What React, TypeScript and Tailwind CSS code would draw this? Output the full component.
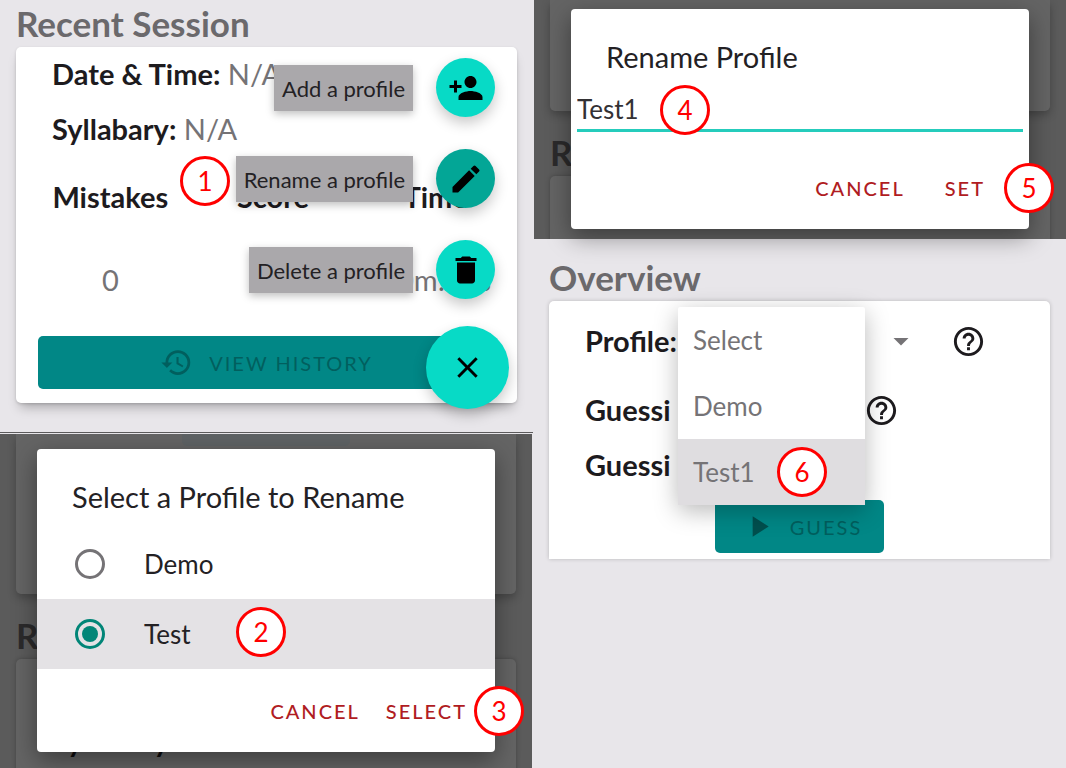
import type { ReactNode } from "react";
import {
  MdArrowDropDown,
  MdClose,
  MdDelete,
  MdEdit,
  MdHelpOutline,
  MdHistory,
  MdPersonAdd,
  MdPlayArrow,
} from "react-icons/md";

const cardShadow = "shadow-[0_1px_3px_rgba(0,0,0,0.15),0_8px_12px_-4px_rgba(0,0,0,0.28)]";
const fabShadow = "shadow-[0_6px_14px_rgba(0,0,0,0.22)]";

function Heading({ children }: { children: ReactNode }) {
  return (
    <h2 className="pb-px text-[35px] leading-[46px] font-bold text-[#6b696c]">{children}</h2>
  );
}

function Callout({ n, className }: { n: number; className: string }) {
  return (
    <span
      className={`absolute z-20 flex size-[50px] items-center justify-center rounded-full border-3 border-[#ff0000] bg-white text-[26px] leading-none text-[#ff0000] ${className}`}
    >
      {n}
    </span>
  );
}

function SpeedDialItem({ label, icon, active }: { label: string; icon: ReactNode; active?: boolean }) {
  return (
    <div className="flex items-center gap-[23px]">
      <span className="bg-[#aaa8ab] px-2 pt-px text-[22px] leading-[45px] text-[#232124] shadow-[0_3px_8px_rgba(0,0,0,0.25)]">
        {label}
      </span>
      <button
        type="button"
        aria-label={label}
        className={`flex size-[59px] items-center justify-center rounded-full text-[36px] text-black ${fabShadow} ${
          active ? "bg-[#03a696]" : "bg-[#07dac6]"
        }`}
      >
        {icon}
      </button>
    </div>
  );
}

function RecentSession() {
  return (
    <section className="relative px-4 pb-[29px]">
      <Heading>Recent Session</Heading>
      <div className={`rounded-[5px] bg-white pt-[7px] pb-[14px] text-[29px] leading-10 ${cardShadow}`}>
        <div className="flex flex-col gap-[15px] pl-9 text-[#757376]">
          <p>
            <b className="font-bold text-[#1d1b1e]">Date &amp; Time:</b> N/A
          </p>
          <p>
            <b className="font-bold text-[#1d1b1e]">Syllabary:</b> N/A
          </p>
        </div>
        <div className="mt-7 pl-[13px]">
          <table className="w-full table-fixed text-center text-[#757376]">
            <thead className="text-[#1d1b1e]">
              <tr>
                <th className="pb-[43px] font-bold">Mistakes</th>
                <th className="pb-[43px] font-bold">Score</th>
                <th className="pb-[43px] font-bold">Time</th>
              </tr>
            </thead>
            <tbody>
              <tr>
                <td>0</td>
                <td>0</td>
                <td>00m:00s</td>
              </tr>
            </tbody>
          </table>
        </div>
        <div className="mt-9 px-[22px]">
          <button
            type="button"
            className="flex h-[53px] w-full items-center justify-center gap-4 rounded-[5px] bg-[#018786] text-[20px] tracking-[2px] text-[#015f5e]"
          >
            <MdHistory className="text-[33px]" />
            VIEW HISTORY
          </button>
        </div>
      </div>

      <div className="absolute top-[58px] right-6 flex flex-col items-end gap-[27px]">
        <div className="flex flex-col items-end gap-8 pr-[14px]">
          <SpeedDialItem label="Add a profile" icon={<MdPersonAdd />} />
          <SpeedDialItem label="Rename a profile" icon={<MdEdit />} active />
          <SpeedDialItem label="Delete a profile" icon={<MdDelete />} />
        </div>
        <button
          type="button"
          aria-label="Close menu"
          className={`flex size-[83px] items-center justify-center rounded-full bg-[#07dac6] text-[35px] text-black ${fabShadow}`}
        >
          <MdClose />
        </button>
      </div>
      <Callout n={1} className="top-[156px] left-[180px]" />
    </section>
  );
}

/* Dimmed page behind an open dialog. */
function Backdrop({ firstCard, buttonEdge }: { firstCard: string; buttonEdge?: boolean }) {
  return (
    <div className="absolute inset-0 overflow-hidden bg-[#5b5b5b] px-4">
      <div
        className={`flex justify-center rounded-b-[5px] bg-[#646464] shadow-[0_4px_8px_rgba(0,0,0,0.25)] ${firstCard}`}
      >
        {buttonEdge && <div className="h-3 w-[168px] rounded-b-[5px] bg-[#5e6264]" />}
      </div>
      <p className="mt-[18px] pb-px text-[35px] leading-[46px] font-bold text-[#2b2a2b]">Recent Session</p>
      <div className="h-[300px] rounded-t-[5px] bg-[#646464] pt-[62px] pl-9 text-[29px] leading-10 font-bold text-[#0d0c0d] shadow-[0_0_4px_rgba(0,0,0,0.25)]">
        {buttonEdge && "Syllabary:"}
      </div>
    </div>
  );
}

function Dialog({ title, children }: { title: string; children: ReactNode }) {
  return (
    <form className="relative rounded-[4px] bg-white shadow-[0_8px_24px_rgba(0,0,0,0.4)]">
      <h3 className="pt-7 pl-[35px] text-[29px] leading-10 text-[#232124]">{title}</h3>
      {children}
    </form>
  );
}

function DialogButton({ children }: { children: ReactNode }) {
  return (
    <button type="button" className="text-[20px] leading-6 font-medium tracking-[2px] text-[#b01c22]">
      {children}
    </button>
  );
}

function SelectProfileDialog() {
  const row = "flex h-[70px] items-center gap-[39px] pl-[38px] text-[26px] text-[#232124]";
  const radio =
    "grid size-[30px] appearance-none place-content-center rounded-full border-3 border-[#757376] checked:border-[#018577] checked:before:size-4 checked:before:rounded-full checked:before:bg-[#018577]";
  return (
    <section className="relative flex-1 border-t border-[#5c5b5c]">
      <div className="relative h-full border-t border-r border-[#e8e6ea] px-[37px] pt-[15px] pb-4">
        <Backdrop firstCard="h-[160px]" buttonEdge />
        <Dialog title="Select a Profile to Rename">
          <div className="pt-3">
            <label className={row}>
              <input type="radio" name="profile" className={radio} />
              Demo
            </label>
            <label className={`${row} relative bg-[#e4e2e5]`}>
              <input type="radio" name="profile" defaultChecked className={radio} />
              Test
              <Callout n={2} className="top-2 left-[199px]" />
            </label>
          </div>
          <div className="relative flex justify-end gap-[26px] pt-[30px] pr-7 pb-[29px]">
            <DialogButton>CANCEL</DialogButton>
            <DialogButton>SELECT</DialogButton>
            <Callout n={3} className="top-[17px] -right-[29px]" />
          </div>
        </Dialog>
      </div>
    </section>
  );
}

function RenameDialog() {
  return (
    <section className="relative ml-px px-[37px] pt-[9px] pb-[10px]">
      <Backdrop firstCard="h-[111px]" />
      <Dialog title="Rename Profile">
        <div className="relative px-[6px] pt-[11px]">
          <input
            type="text"
            aria-label="Profile name"
            defaultValue="Test1"
            className="block h-11 w-full border-b-3 border-[#25ccbc] bg-transparent text-[26px] text-[#333134] outline-none"
          />
          <Callout n={4} className="top-2 left-[89px]" />
        </div>
        <div className="relative flex justify-end gap-10 pt-11 pr-11 pb-[29px]">
          <DialogButton>CANCEL</DialogButton>
          <DialogButton>SET</DialogButton>
          <Callout n={5} className="top-[31px] -right-[25px]" />
        </div>
      </Dialog>
    </section>
  );
}

function Overview() {
  const option = "flex h-[66px] w-full items-center pl-[15px] text-left";
  return (
    <section className="px-4 pt-[15px]">
      <Heading>Overview</Heading>
      <div className="relative rounded-t-[5px] bg-white pt-5 pb-[6px] pl-9 text-[29px] leading-10 font-bold text-[#1d1b1e] shadow-[0_0_4px_rgba(0,0,0,0.2)]">
        <div className="flex items-center">
          <label htmlFor="profile-select" className="w-[92px]">
            Profile:
          </label>
          <div className="relative ml-4 w-[226px]">
            <select
              id="profile-select"
              defaultValue="Test1"
              className="block w-full appearance-none bg-transparent text-[26px] font-normal text-[#757376]"
            >
              <option>Select</option>
              <option>Demo</option>
              <option>Test1</option>
            </select>
            <MdArrowDropDown className="pointer-events-none absolute top-[2px] right-0 text-[36px] text-[#757376]" />
          </div>
          <button type="button" aria-label="Help with profiles" className="ml-8 text-[35px]">
            <MdHelpOutline />
          </button>
        </div>
        <div className="mt-[29px] flex items-center">
          <span className="w-[279px]">Guessi</span>
          <button type="button" aria-label="Help with guessing" className="text-[35px]">
            <MdHelpOutline />
          </button>
        </div>
        <p className="mt-[15px]">Guessi</p>
        <div className="mt-[15px] flex justify-center pr-9">
          <button
            type="button"
            className="flex h-[53px] items-center gap-[14px] rounded-[5px] bg-[#018786] pr-[22px] pl-[26px] text-[20px] font-normal tracking-[2px] text-[#015f5e]"
          >
            <MdPlayArrow className="text-[35px] text-[#014f4e]" />
            GUESS
          </button>
        </div>

        <ul className="absolute top-[6px] left-[129px] z-10 w-[187px] rounded-[2px] bg-white text-[26px] font-normal text-[#757376] shadow-[0_6px_24px_rgba(0,0,0,0.28)]">
          <li>
            <button type="button" className={option}>
              Select
            </button>
          </li>
          <li>
            <button type="button" className={option}>
              Demo
            </button>
          </li>
          <li className="relative bg-[#dfdde0]">
            <button type="button" className={option}>
              Test1
            </button>
            <Callout n={6} className="top-2 left-[99px]" />
          </li>
        </ul>
      </div>
    </section>
  );
}

export default function App() {
  return (
    <main className="grid min-h-screen grid-cols-2 bg-[#e8e6ea] font-[Lato,sans-serif]">
      <div className="flex flex-col">
        <RecentSession />
        <SelectProfileDialog />
      </div>
      <div className="flex flex-col">
        <RenameDialog />
        <Overview />
      </div>
    </main>
  );
}
